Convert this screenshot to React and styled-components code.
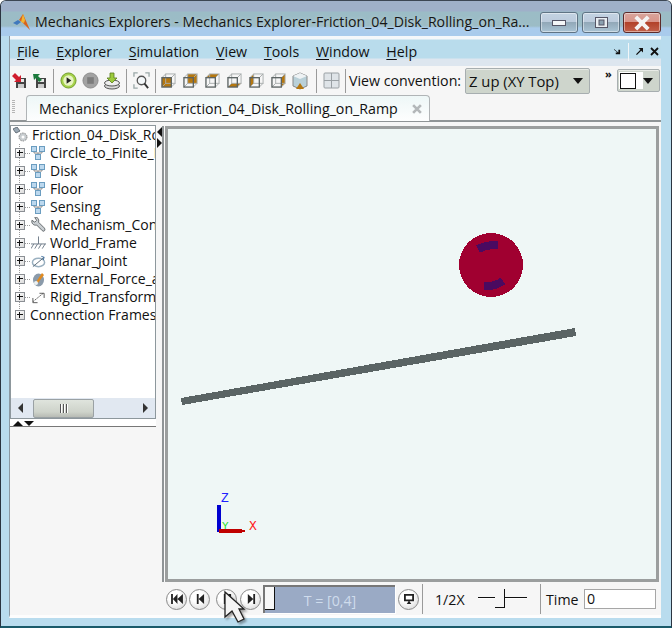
import React from 'react';
import styled, { createGlobalStyle } from 'styled-components';

const Global = createGlobalStyle`
  html, body { margin: 0; padding: 0; background: #fff; }
  body { font-family: "Open Sans", "Noto Sans", sans-serif; color: #111; }
  * { box-sizing: border-box; }
`;

const Frame = styled.div`
  position: relative;
  width: 672px;
  height: 628px;
  overflow: hidden;
  display: flex;
  flex-direction: column;
  border: 1px solid #2a3440;
  border-top-color: #3c4654;
  border-bottom: 2px solid #1a5a6a;
  border-radius: 6px 6px 0 0;
  background: #b9dcee;
`;

const TitleBar = styled.div`
  height: 35px;
  flex: none;
  display: flex;
  align-items: flex-start;
  padding: 11px 10px 0 12px;
  background: linear-gradient(#9fb0c9 0, #9fb0c9 10px, #9bbcc6 11px, #9cbcc6 25px, #a9cbec 27px, #a9cbec 100%);
`;

const LogoMark = styled.svg`
  flex: none;
  margin-top: 2px;
`;

const TitleText = styled.div`
  font-size: 14.15px;
  line-height: 20px;
  margin-left: 5px;
  flex: 1;
  white-space: nowrap;
  color: #161616;
  text-shadow: 0 0 4px rgba(235, 245, 250, 0.45);
`;

const CapButton = styled.div`
  width: 38px;
  height: 21px;
  margin-left: ${(p) => (p.$close ? 3 : 4)}px;
  border: 1px solid ${(p) => (p.$close ? '#5c2a2a' : '#5f7384')};
  border-radius: 3px;
  display: flex;
  align-items: center;
  justify-content: center;
  box-shadow: inset 0 0 0 1px rgba(255, 255, 255, 0.45);
  background: ${(p) =>
    p.$close
      ? 'linear-gradient(#d8a59c 0, #d9958a 45%, #b2422a 50%, #c2604a 100%)'
      : 'linear-gradient(#c3d3e2 0, #bccbdc 45%, #92a8b8 50%, #a9c3d4 100%)'};
`;

const Client = styled.div`
  flex: 1;
  min-height: 0;
  margin: 0 10px 8px 8px;
  display: flex;
  flex-direction: column;
  background: #f6f6f6;
  border-left: 1px solid #8b99a3;
  border-bottom: 3px solid #fdfdfd;
`;

const MenuBar = styled.div`
  height: 30px;
  flex: none;
  display: flex;
  align-items: center;
  padding: 3px 2px 2px 7px;
  font-size: 14.2px;
  background: linear-gradient(#f4f7fa 0, #f4f7fa 3px, #b9dcec 4px, #b9dcec 22px, #dde6ef 23px, #dde6ef 100%);
`;

const MenuItem = styled.div`
  margin-right: 16.8px;
  white-space: nowrap;
  u { text-underline-offset: 2px; }
`;

const MenuTools = styled.div`
  margin-left: auto;
  display: flex;
  align-items: center;
  gap: 7px;
`;

const MenuDivider = styled.div`
  width: 1px;
  height: 18px;
  background: #f2f6f8;
`;

const ToolBar = styled.div`
  height: 29px;
  flex: none;
  display: flex;
  align-items: center;
  font-size: 14.2px;
`;

const ToolSlot = styled.div`
  width: ${(p) => p.$w || 22}px;
  height: 20px;
  flex: none;
  display: flex;
  align-items: center;
  justify-content: center;
`;

const ToolSep = styled.div`
  width: 1px;
  height: 24px;
  flex: none;
  margin: 0 ${(p) => p.$r ?? 3}px 0 ${(p) => p.$l ?? 3}px;
  background: #9a9a9a;
`;

const ToolLabel = styled.div`
  white-space: nowrap;
  margin-left: 3px;
  width: 116px;
`;

const Combo = styled.div`
  height: ${(p) => p.$h}px;
  width: ${(p) => p.$w}px;
  flex: none;
  display: flex;
  align-items: center;
  justify-content: space-between;
  padding: 0 6px 0 ${(p) => p.$pl ?? 3}px;
  font-size: 14.8px;
  border: 1px solid #a7aeb0;
  border-radius: 2px;
  background: #ced5cc;
  box-shadow: inset 0 1px 0 #e8ebe6;
`;

const Caret = styled.div`
  width: 0;
  height: 0;
  border: 5px solid transparent;
  border-top: 6px solid #111;
  border-bottom: 0;
`;

const Chevrons = styled.div`
  width: 27px;
  flex: none;
  padding-left: 15px;
  font-size: 11px;
  font-weight: 700;
  line-height: 10px;
  margin-top: -14px;
`;

const WhiteSwatch = styled.div`
  width: 24px;
  height: 17px;
  background: #fff;
  padding: 1px 6px 2px 1px;
  &::before {
    content: '';
    display: block;
    width: 14px;
    height: 14px;
    border: 1px solid #111;
  }
`;

const TabStrip = styled.div`
  height: 27px;
  flex: none;
  display: flex;
  align-items: flex-end;
  padding-left: 2px;
  border-bottom: 2px solid #8f9496;
`;

const Grip = styled.div`
  width: 3px;
  height: 14px;
  margin-bottom: 6px;
  background: repeating-linear-gradient(#b5b5b5 0 1px, #f6f6f6 1px 2px);
`;

const Tab = styled.div`
  margin-left: 11px;
  width: 404px;
  height: 26px;
  margin-bottom: -1px;
  display: flex;
  align-items: center;
  padding: 0 7px 0 12px;
  font-size: 14.2px;
  white-space: nowrap;
  border: 1px solid #b0b4b6;
  border-bottom: 0;
  border-radius: 4px 4px 0 0;
  background: linear-gradient(#eef7f7, #fdfefe);
`;

const TabClose = styled.div`
  margin-left: auto;
  display: flex;
`;

const Main = styled.div`
  flex: 1;
  min-height: 0;
  display: flex;
`;

const Side = styled.div`
  width: 146px;
  flex: none;
  display: flex;
  flex-direction: column;
  padding-top: 3px;
`;

const TreePane = styled.div`
  height: 294px;
  flex: none;
  display: flex;
  flex-direction: column;
  border: 1px solid #8d979c;
  background: #fff;
`;

const Tree = styled.div`
  flex: 1;
  min-height: 0;
  overflow: hidden;
  font-size: 14px;
`;

const TreeRow = styled.div`
  height: 18px;
  display: flex;
  align-items: center;
  white-space: nowrap;
  padding-left: ${(p) => (p.$root ? 2 : 4)}px;
  background: ${(p) =>
    p.$root
      ? 'none'
      : `repeating-linear-gradient(#9a9a9a 0 1px, transparent 1px 2px) 8px 0 / 1px ${p.$last ? '50%' : '100%'} no-repeat`};
  svg { flex: none; }
`;

const TreeLabel = styled.span`
  margin-left: ${(p) => p.$gap || 4}px;
  line-height: 18px;
`;

const Expander = styled.div`
  position: relative;
  width: 10px;
  height: 10px;
  flex: none;
  border: 1px solid #8b8f94;
  background: linear-gradient(135deg, #fff, #dcdcdc);
  &::before {
    content: '';
    position: absolute;
    left: 1px;
    top: 3px;
    width: 6px;
    height: 1px;
    background: #111;
  }
  &::after {
    content: '';
    position: absolute;
    left: 3px;
    top: 1px;
    width: 1px;
    height: 6px;
    background: #111;
  }
`;

const Dots = styled.div`
  width: 5px;
  height: 1px;
  flex: none;
  margin-right: 1px;
  background: repeating-linear-gradient(90deg, #9a9a9a 0 1px, transparent 1px 2px);
`;

const HScroll = styled.div`
  height: 20px;
  flex: none;
  display: flex;
  align-items: center;
  padding: 0 7px 0 7px;
  background: #e1e8f1;
`;

const ScrollThumb = styled.div`
  width: 61px;
  height: 19px;
  margin-left: 10px;
  display: flex;
  align-items: center;
  justify-content: center;
  gap: 2px;
  border: 1px solid #9aa1a4;
  border-radius: 2px;
  background: linear-gradient(#dfe4dd, #ced3ca 70%, #b7bbb4);
  span {
    width: 1px;
    height: 9px;
    background: #555;
    box-shadow: 1px 0 0 #fff;
  }
`;

const ScrollArrow = styled.div`
  width: 0;
  height: 0;
  border-top: 5px solid transparent;
  border-bottom: 5px solid transparent;
  ${(p) => (p.$dir === 'left' ? 'border-right: 5px solid #333;' : 'border-left: 5px solid #333;')}
  ${(p) => (p.$dir === 'right' ? 'margin-left: auto;' : '')}
`;

const PaneGrip = styled.div`
  height: 8px;
  flex: none;
  display: flex;
  padding: 2px 0 0 3px;
  gap: 1px;
  background: #fff;
  border-bottom: 1px solid #777;
`;

const Tri = styled.div`
  width: 0;
  height: 0;
  border-left: 5px solid transparent;
  border-right: 5px solid transparent;
  ${(p) => (p.$up ? 'border-bottom: 5px solid #111;' : 'border-top: 5px solid #111;')}
`;

const Splitter = styled.div`
  width: 6px;
  flex: none;
  display: flex;
  flex-direction: column;
  align-items: flex-start;
  padding: 5px 0 0 1px;
  gap: 1px;
`;

const SplitTri = styled.div`
  width: 0;
  height: 0;
  border-top: 5px solid transparent;
  border-bottom: 5px solid transparent;
  ${(p) => (p.$left ? 'border-right: 5px solid #111;' : 'border-left: 5px solid #111;')}
`;

const ViewColumn = styled.div`
  flex: 1;
  min-width: 0;
  display: flex;
  flex-direction: column;
  padding: 4px 2px 0 0;
`;

const ViewFrame = styled.div`
  height: 456px;
  flex: none;
  border-left: 2px solid #8f9496;
  padding-left: 1px;
  background: #fbfbfb;
`;

const ViewPort = styled.div`
  height: 456px;
  border: 3px solid #9b9e9e;
  background: #eff7f6;
  svg { display: block; }
`;

const PlayBar = styled.div`
  flex: 1;
  display: flex;
  align-items: center;
  font-size: 14.2px;
  padding: 1px 0 0 4px;
`;

const RoundBtn = styled.div`
  width: 21px;
  height: 21px;
  flex: none;
  margin-right: ${(p) => p.$mr ?? 2}px;
  margin-left: ${(p) => p.$ml ?? 0}px;
  border-radius: 50%;
  display: flex;
  align-items: center;
  justify-content: center;
  border: 1px solid #8a8a8a;
  background: radial-gradient(circle at 40% 35%, #fff 35%, #cfcfcf 100%);
`;

const TimeTrack = styled.div`
  position: relative;
  width: 132px;
  height: 28px;
  flex: none;
  display: flex;
  align-items: center;
  justify-content: center;
  color: #cfdcec;
  background: #9aaac5;
  border-top: 2px solid #777;
  border-left: 2px solid #777;
  box-shadow: 1px 1px 0 #fff;
`;

const TimeThumb = styled.div`
  position: absolute;
  left: 0;
  top: 0;
  width: 10px;
  height: 23px;
  background: #f8f8f8;
  border-right: 1px solid #111;
  border-bottom: 1px solid #111;
`;

const BarSep = styled.div`
  width: 1px;
  height: 30px;
  flex: none;
  background: #9a9a9a;
`;

const RateLabel = styled.div`
  width: 32px;
  flex: none;
  margin-left: 12px;
  white-space: nowrap;
`;

const RateSlider = styled.div`
  position: relative;
  width: 49px;
  height: 20px;
  flex: none;
  margin: 0 13px 0 11px;
  &::before {
    content: '';
    position: absolute;
    left: 0;
    right: 0;
    top: 8px;
    height: 1px;
    background: #111;
    box-shadow: 0 1px 0 #fff;
  }
`;

const RateThumb = styled.div`
  position: absolute;
  left: 17px;
  top: 0;
  width: 10px;
  height: 19px;
  background: #f6f6f6;
  border-right: 1px solid #111;
  border-bottom: 1px solid #111;
`;

const TimeLabel = styled.div`
  width: 38px;
  flex: none;
  margin-left: 5px;
`;

const TimeInput = styled.div`
  width: 72px;
  height: 20px;
  flex: none;
  padding-left: 2px;
  line-height: 18px;
  border: 1px solid #a6a6a6;
  background: #fff;
`;

const Pointer = styled.svg`
  position: absolute;
  left: 223px;
  top: 589px;
  pointer-events: none;
  filter: drop-shadow(2px 2px 1px rgba(0, 0, 0, 0.35));
`;

const Cube = ({ face }) => {
  const polys = {
    front: '1,5 11,5 11,15 1,15',
    back: '5,1 15,1 15,11 5,11',
    left: '1,5 5,1 5,11 1,15',
    right: '11,5 15,1 15,11 11,15',
    top: '1,5 5,1 15,1 11,5',
    bottom: '1,15 5,11 15,11 11,15',
  };
  return (
    <svg width="15" height="15" viewBox="0 0 16 16">
      <polygon points={polys[face]} fill="#b5770f" />
      <g fill="none">
        <rect x="5" y="1" width="10" height="10" stroke="#a8acac" />
        <path d="M1 5L5 1M11 5L15 1M11 15L15 11M1 15L5 11" stroke="#a8acac" />
        <rect x="1" y="5" width="10" height="10" stroke="#5a6262" strokeWidth="1.4" />
      </g>
    </svg>
  );
};

const Floppy = ({ arrow, flip }) => (
  <svg width="15" height="15" viewBox="0 0 15 15">
    <rect x="4" y="5" width="10" height="10" fill="#444" />
    <rect x="6" y="6" width="6" height="3" fill="#e8e8e8" />
    <rect x="6" y="11" width="6" height="4" fill="#ccc" />
    <path d={flip ? 'M1 1h7L6 3l4 4-3 2-3-4-2 2z' : 'M9 9H2l2-2-4-4 3-3 4 4 2-2z'} fill={arrow} />
  </svg>
);

const PlayIcon = () => (
  <svg width="17" height="17" viewBox="0 0 18 18">
    <circle cx="9" cy="9" r="8" fill="#a6d24a" stroke="#6f9a28" />
    <circle cx="9" cy="9" r="5.500" fill="#e8f4c4" />
    <path d="M7 5.500l5 3.500-5 3.500z" fill="#222" />
  </svg>
);

const StopIcon = () => (
  <svg width="17" height="17" viewBox="0 0 18 18">
    <circle cx="9" cy="9" r="8" fill="#a2a2a2" stroke="#8a8a8a" />
    <rect x="5.500" y="5.500" width="7" height="7" fill="#7c7c7c" />
  </svg>
);

const StepIcon = () => (
  <svg width="18" height="18" viewBox="0 0 18 18">
    <ellipse cx="9" cy="14" rx="7.500" ry="3" fill="#d8d8d8" stroke="#555" />
    <ellipse cx="9" cy="11" rx="7.500" ry="3" fill="#eee" stroke="#555" />
    <path d="M7 1h4v5h3l-5 5-5-5h3z" fill="#9ccb3c" stroke="#5c7c1c" strokeWidth="0.8" />
  </svg>
);

const ZoomFit = () => (
  <svg width="17" height="17" viewBox="0 0 18 18" fill="none">
    <path d="M1 5V1h4M17 5V1h-4M1 13v4h4" stroke="#9aa8a8" strokeWidth="1.400" />
    <circle cx="9" cy="9" r="4.500" fill="#f4f8fa" stroke="#555" strokeWidth="1.400" />
    <path d="M12 12l4 5" stroke="#333" strokeWidth="2" />
  </svg>
);

const IsoCube = () => (
  <svg width="16" height="18" viewBox="0 0 16 18">
    <path d="M8 1l7 3v10l-7 3-7-3V4z" fill="#b9d0d8" stroke="#888" />
    <path d="M1 4l7 3 7-3-7-3z" fill="#eef2f4" />
    <path d="M4 17l4-6 4 6z" fill="#b5770f" />
  </svg>
);

const GridIcon = () => (
  <svg width="17" height="17" viewBox="0 0 17 17">
    <rect x="1" y="1" width="15" height="15" fill="#dfe4e8" stroke="#9aa0a4" rx="1" />
    <path d="M8.500 1v15M1 8.500h15" stroke="#9aa0a4" />
  </svg>
);

const Matlab = () => (
  <LogoMark width="17" height="17" viewBox="0 0 17 17">
    <path d="M0 9l5-3 3 2-4 3z" fill="#3f78bc" />
    <path d="M10 0l7 16-5-5-3-3-3-2z" fill="#d8641c" />
    <path d="M10 0L8 8l3 1 1-3z" fill="#f2b632" />
  </LogoMark>
);

const Block = () => (
  <svg width="15" height="15" viewBox="0 0 15 15">
    <g fill="#bcd8ee" stroke="#6b9dc0">
      <rect x="0.500" y="0.500" width="5" height="5" />
      <rect x="8.500" y="0.500" width="5" height="5" />
      <rect x="4.500" y="8.500" width="5" height="5" />
    </g>
    <path d="M3 6v1h8V6M7 7v1" fill="none" stroke="#888" />
  </svg>
);

const Wrench = () => (
  <svg width="15" height="16" viewBox="0 0 16 16">
    <path d="M1 3l3 2 2-2-2-3c3-1 5 2 4 5l6 6c2 2 0 5-2 3L6 8C3 9 0 6 1 3z" fill="#c9ced2" stroke="#5f6468" />
  </svg>
);

const Ground = () => (
  <svg width="15" height="14" viewBox="0 0 16 14" fill="none" stroke="#6d7a88">
    <path d="M8 0v8M0 8h16M3 8l-3 5M7 8l-3 5M11 8l-3 5M15 8l-3 5" />
  </svg>
);

const Planar = () => (
  <svg width="15" height="15" viewBox="0 0 16 15" fill="none">
    <ellipse cx="8" cy="8.500" rx="6.500" ry="4.500" stroke="#9ab0c0" strokeWidth="1.600" />
    <path d="M2 13L14 3" stroke="#5a6a78" />
    <path d="M11 2l3 1-1 3" stroke="#3a6a9a" />
  </svg>
);

const ForceIcon = () => (
  <svg width="15" height="16" viewBox="0 0 15 16">
    <ellipse cx="7.500" cy="9" rx="5.500" ry="6.500" fill="#8a9aaa" />
    <path d="M5 11l6-9 2 2-6 8z" fill="#e08a20" />
    <circle cx="5" cy="12" r="2" fill="#eef2f4" />
  </svg>
);

const TransformIcon = () => (
  <svg width="15" height="15" viewBox="0 0 16 15" fill="none" stroke="#555">
    <path d="M2 12L13 3" strokeDasharray="2 1" />
    <path d="M2 8v5h5M9 3h5v5" />
  </svg>
);

const RootIcon = () => (
  <svg width="16" height="16" viewBox="0 0 16 16">
    <path d="M0 2l4-2 3 4-4 2z" fill="#9aa8b4" stroke="#66707a" />
    <circle cx="10" cy="10" r="4" fill="#c8cdd0" stroke="#888" strokeDasharray="1.500 1" />
    <circle cx="10" cy="10" r="1.500" fill="#fff" />
  </svg>
);

const MiniX = ({ color = '#111', size = 9, width = 1.8 }) => (
  <svg width={size} height={size} viewBox="0 0 9 9">
    <path d="M1 1l7 7M8 1L1 8" stroke={color} strokeWidth={width} />
  </svg>
);

const treeItems = [
  ['Circle_to_Finite_Line', <Block key="a" />],
  ['Disk', <Block key="b" />],
  ['Floor', <Block key="c" />],
  ['Sensing', <Block key="d" />],
  ['Mechanism_Configuration', <Wrench key="e" />],
  ['World_Frame', <Ground key="f" />],
  ['Planar_Joint', <Planar key="g" />],
  ['External_Force_and_Torque', <ForceIcon key="h" />],
  ['Rigid_Transform', <TransformIcon key="i" />],
];

const faces = ['front', 'back', 'top', 'bottom', 'left', 'right'];

const Scene = () => (
  <svg width="487" height="450" viewBox="168 129 487 450">
    <g shapeRendering="crispEdges">
      <polygon points="181,398 575,328 576,336 182,405" fill="#5a6464" />
      <circle cx="491" cy="265" r="32" fill="#a00030" />
      <path d="M478 249Q488 244 498 245.500" stroke="#4a0a60" strokeWidth="8" fill="none" />
      <path d="M484 286Q494 287 503 281" stroke="#4a0a60" strokeWidth="8" fill="none" />
      <rect x="217" y="505" width="4" height="27" fill="#0000d0" />
      <rect x="219" y="529" width="23" height="4" fill="#c00000" />
      <rect x="242" y="530" width="3" height="2" fill="#c00000" />
    </g>
    <text x="221" y="502" fontSize="13" fontFamily="Liberation Mono, monospace" fill="#2020ff">Z</text>
    <text x="249" y="530" fontSize="13" fontFamily="Liberation Mono, monospace" fill="#ff2020">X</text>
    <text x="222" y="529" fontSize="11" fontFamily="Liberation Mono, monospace" fill="#20e020">Y</text>
  </svg>
);

const BtnGlyph = ({ d }) => (
  <svg width="12" height="10" viewBox="0 0 13 11">
    <path d={d} fill="#222" />
  </svg>
);

export default function App() {
  return (
    <>
      <Global />
      <Frame>
        <TitleBar>
          <Matlab />
          <TitleText>Mechanics Explorers - Mechanics Explorer-Friction_04_Disk_Rolling_on_Ra...</TitleText>
          <CapButton>
            <svg width="14" height="6"><rect x="0.500" y="0.500" width="13" height="5" fill="#f4f6f8" stroke="#556" /></svg>
          </CapButton>
          <CapButton>
            <svg width="13" height="11"><rect x="0.500" y="0.500" width="12" height="10" fill="#e8eef2" stroke="#556" /><rect x="4" y="3" width="5" height="5" fill="#8aa0b0" stroke="#556" /></svg>
          </CapButton>
          <CapButton $close>
            <MiniX color="#f4f4f4" size={16} width={2.2} />
          </CapButton>
        </TitleBar>
        <Client>
          <MenuBar>
            <MenuItem><u>F</u>ile</MenuItem>
            <MenuItem><u>E</u>xplorer</MenuItem>
            <MenuItem><u>S</u>imulation</MenuItem>
            <MenuItem><u>V</u>iew</MenuItem>
            <MenuItem><u>T</u>ools</MenuItem>
            <MenuItem><u>W</u>indow</MenuItem>
            <MenuItem><u>H</u>elp</MenuItem>
            <MenuTools>
              <svg width="7" height="7" viewBox="0 0 8 8"><path d="M0 1l5 4V2l2 0v5H2V5h2L0 2z" fill="#111" /></svg>
              <MenuDivider />
              <svg width="7" height="7" viewBox="0 0 8 8"><path d="M8 0v5L6 3 1 8 0 7l5-5-2-2z" fill="#111" /></svg>
              <MiniX />
            </MenuTools>
          </MenuBar>
          <ToolBar>
            <ToolSlot $w={18}><Floppy arrow="#d01c2c" /></ToolSlot>
            <ToolSlot $w={23}><Floppy arrow="#1c7a3c" flip /></ToolSlot>
            <ToolSep $l={2} />
            <ToolSlot><PlayIcon /></ToolSlot>
            <ToolSlot><StopIcon /></ToolSlot>
            <ToolSlot><StepIcon /></ToolSlot>
            <ToolSep />
            <ToolSlot><ZoomFit /></ToolSlot>
            <ToolSep $r={1} />
            {faces.map((f) => (
              <ToolSlot key={f}><Cube face={f} /></ToolSlot>
            ))}
            <ToolSlot><IsoCube /></ToolSlot>
            <ToolSep $l={5} />
            <ToolSlot><GridIcon /></ToolSlot>
            <ToolSep $r={0} />
            <ToolLabel>View convention:</ToolLabel>
            <Combo $w={125} $h={26}>Z up (XY Top)<Caret /></Combo>
            <Chevrons>»</Chevrons>
            <Combo $w={43} $h={23} $pl={1}><WhiteSwatch /><Caret /></Combo>
          </ToolBar>
          <TabStrip>
            <Grip />
            <Tab>
              Mechanics Explorer-Friction_04_Disk_Rolling_on_Ramp
              <TabClose><MiniX color="#b4b8ba" size={10} width={2.4} /></TabClose>
            </Tab>
          </TabStrip>
          <Main>
            <Side>
              <TreePane>
                <Tree>
                  <TreeRow $root>
                    <RootIcon /><TreeLabel $gap={3}>Friction_04_Disk_Rolling_on_Ramp</TreeLabel>
                  </TreeRow>
                  {treeItems.map(([label, icon]) => (
                    <TreeRow key={label}>
                      <Expander /><Dots />{icon}<TreeLabel>{label}</TreeLabel>
                    </TreeRow>
                  ))}
                  <TreeRow $last><Expander /><TreeLabel $gap={5}>Connection Frames</TreeLabel></TreeRow>
                </Tree>
                <HScroll>
                  <ScrollArrow $dir="left" />
                  <ScrollThumb><span /><span /><span /></ScrollThumb>
                  <ScrollArrow $dir="right" />
                </HScroll>
              </TreePane>
              <PaneGrip><Tri $up /><Tri /></PaneGrip>
            </Side>
            <Splitter><SplitTri $left /><SplitTri /></Splitter>
            <ViewColumn>
              <ViewFrame>
                <ViewPort><Scene /></ViewPort>
              </ViewFrame>
              <PlayBar>
                <RoundBtn><BtnGlyph d="M0 0h2v11H0zM7 0v11L2 5.500zM13 0v11L7 5.500z" /></RoundBtn>
                <RoundBtn $mr={6}><BtnGlyph d="M3 0h2v11H3zM11 0v11L5 5.500z" /></RoundBtn>
                <RoundBtn $mr={3}><BtnGlyph d="M3 0h3v11H3zM8 0h3v11H8z" /></RoundBtn>
                <RoundBtn><BtnGlyph d="M3 0l6 5.500L3 11zM9 0h2v11H9z" /></RoundBtn>
                <TimeTrack><TimeThumb />T = [0,4]</TimeTrack>
                <RoundBtn $ml={3} $mr={3}><BtnGlyph d="M1 0h11v8H7l2 3H4l2-3H1zM3 2v4h7V2z" /></RoundBtn>
                <BarSep />
                <RateLabel>1/2X</RateLabel>
                <RateSlider><RateThumb /></RateSlider>
                <BarSep />
                <TimeLabel>Time</TimeLabel>
                <TimeInput>0</TimeInput>
              </PlayBar>
            </ViewColumn>
          </Main>
        </Client>
        <Pointer width="26" height="36" viewBox="0 0 26 36">
          <path d="M1 2V27L8 21L14 32L20 29L15 19H20Z" fill="#f4f4f4" stroke="#222" strokeWidth="1.300" />
        </Pointer>
      </Frame>
    </>
  );
}
